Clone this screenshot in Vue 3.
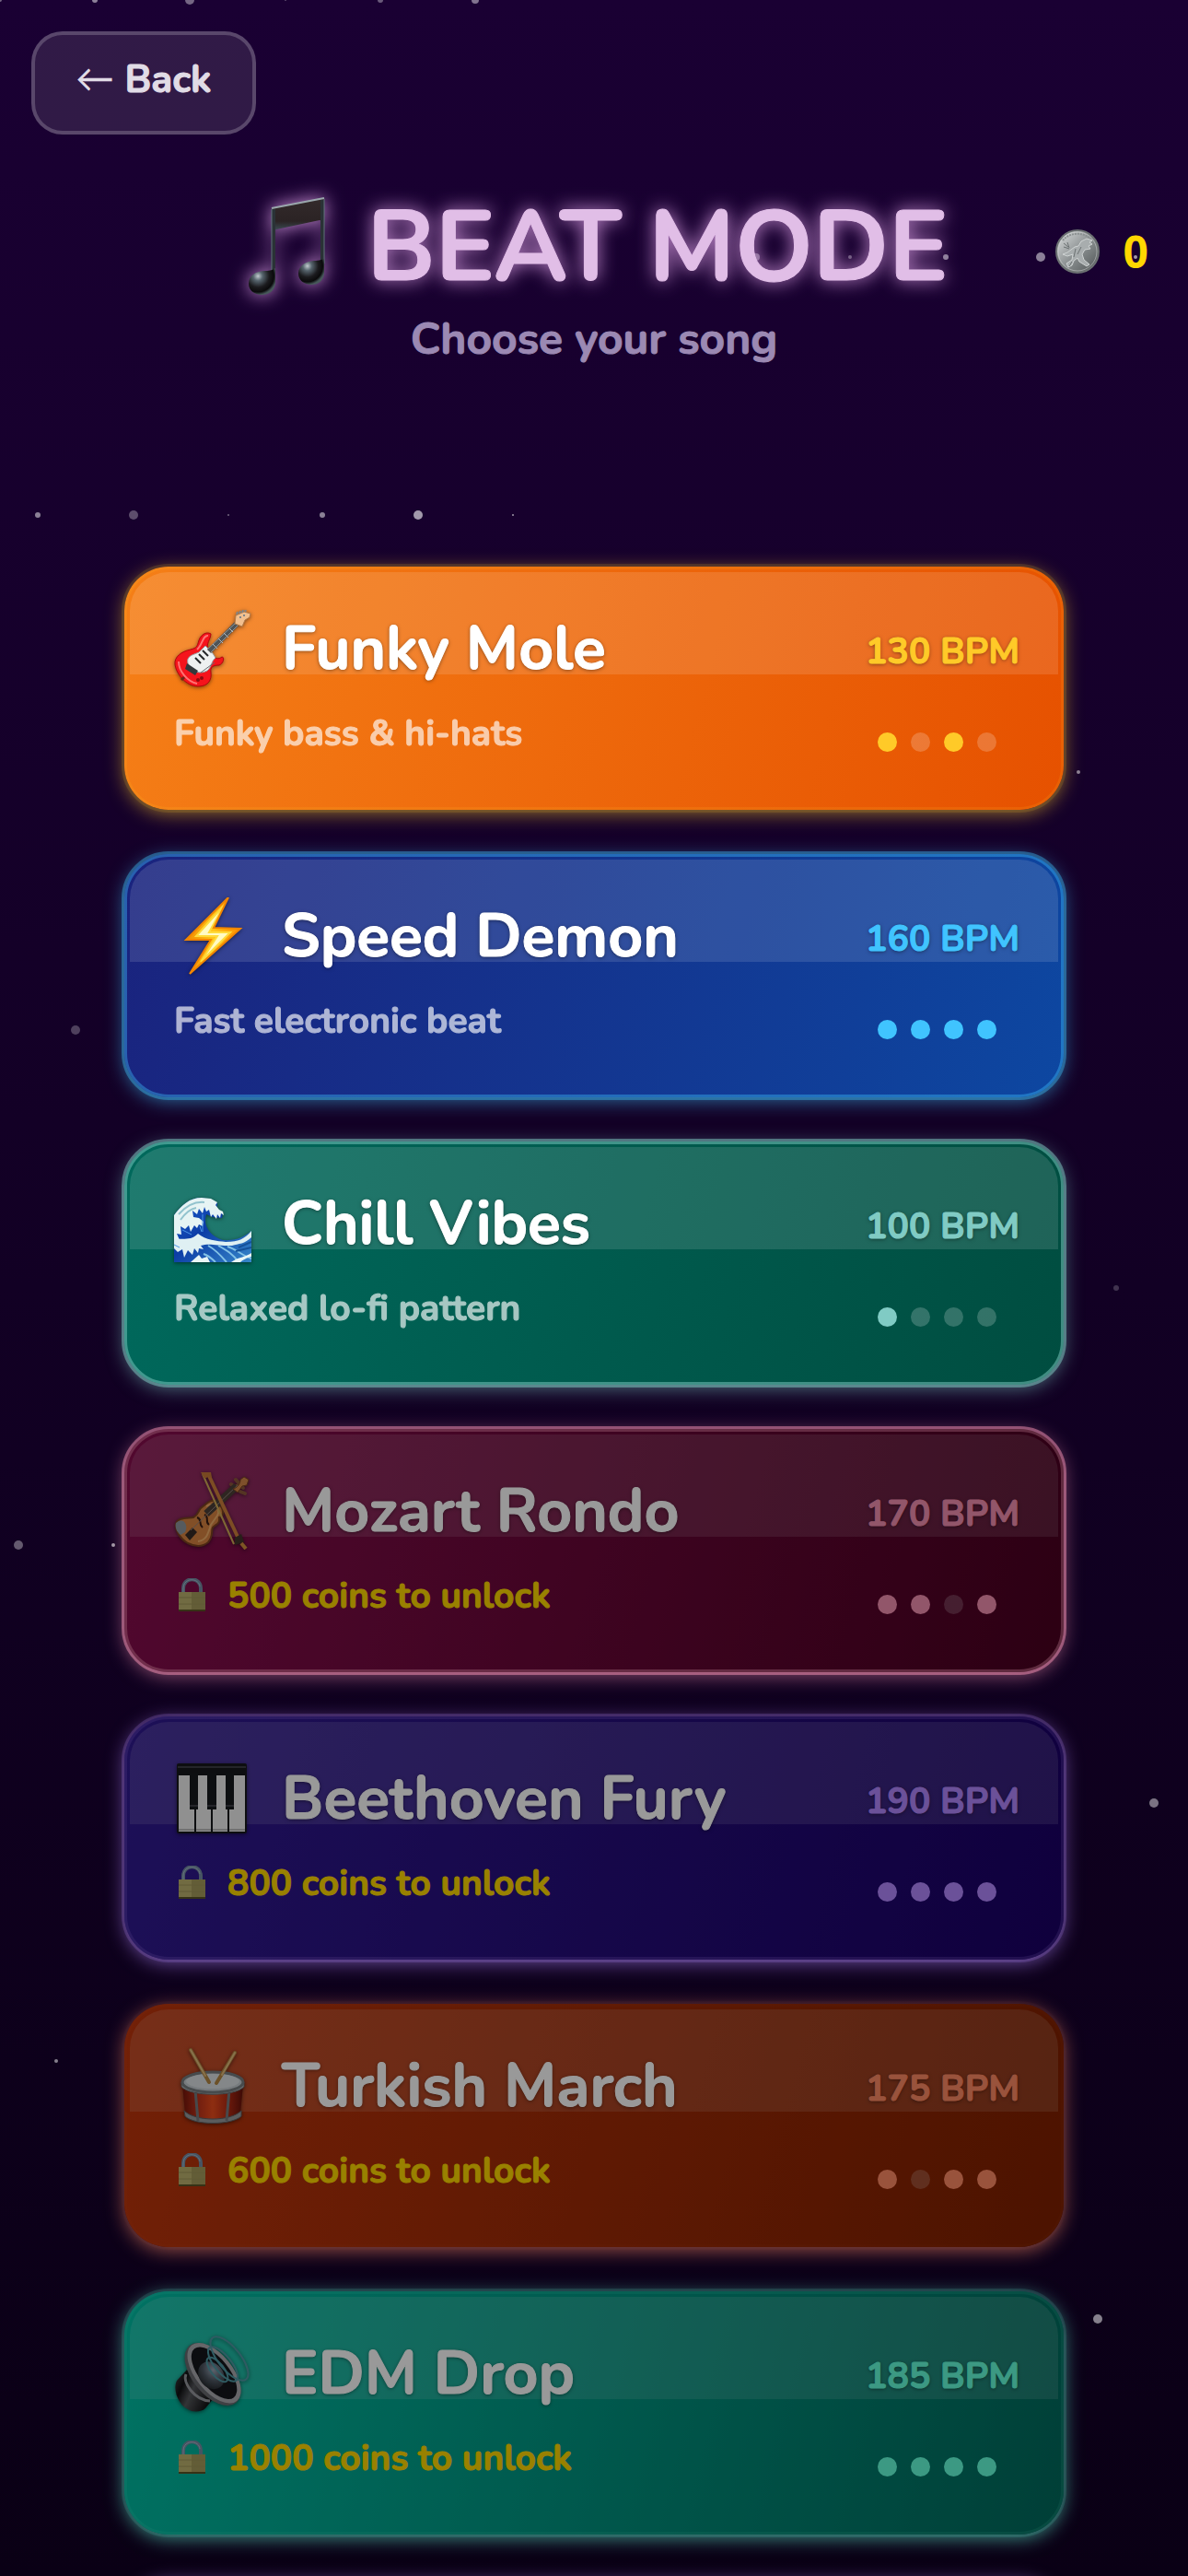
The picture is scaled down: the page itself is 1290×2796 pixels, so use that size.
<script setup>
import { ref } from 'vue'

const coins = ref(0)
const selected = ref(null)

const songs = [
  { id: 'funky', icon: 'guitar', name: 'Funky Mole', text: 'Funky bass & hi-hats', bpm: 130, beats: [1, 0, 1, 0], cost: 0 },
  { id: 'speed', icon: 'bolt', name: 'Speed Demon', text: 'Fast electronic beat', bpm: 160, beats: [1, 1, 1, 1], cost: 0 },
  { id: 'chill', icon: 'wave', name: 'Chill Vibes', text: 'Relaxed lo-fi pattern', bpm: 100, beats: [1, 0, 0, 0], cost: 0 },
  { id: 'mozart', icon: 'violin', name: 'Mozart Rondo', bpm: 170, beats: [1, 1, 0, 1], cost: 500 },
  { id: 'beethoven', icon: 'piano', name: 'Beethoven Fury', bpm: 190, beats: [1, 1, 1, 1], cost: 800 },
  { id: 'turkish', icon: 'drum', name: 'Turkish March', bpm: 175, beats: [1, 0, 1, 1], cost: 600 },
  { id: 'edm', icon: 'speaker', name: 'EDM Drop', bpm: 185, beats: [1, 1, 1, 1], cost: 1000 },
]

// x, y, radius, opacity
const stars = [
  [0, 0, 2, 0.4], [103, 0, 3, 0.5], [206, 0, 5, 0.4], [310, 0, 1, 0.3], [413, 0, 3, 0.35], [516, 0, 4, 0.45],
  [821, 279, 4, 0.4], [923, 279, 2, 0.35], [1027, 279, 3, 0.5], [1130, 279, 5, 0.5], [1233, 279, 2, 0.6],
  [41, 559, 3, 0.5], [145, 559, 5, 0.3], [248, 559, 1, 0.4], [350, 559, 3, 0.5], [454, 559, 5, 0.6], [557, 559, 1, 0.6],
  [1171, 838, 2, 0.5], [82, 1118, 5, 0.25], [1212, 1398, 3, 0.2], [20, 1677, 5, 0.35], [123, 1677, 2, 0.6],
  [1253, 1957, 5, 0.45], [61, 2237, 2, 0.5], [1192, 2517, 5, 0.5],
]

const choose = (song) => {
  if (song.cost > coins.value) return
  selected.value = song.id
}
</script>

<template>
  <main class="page">
    <svg class="stars" aria-hidden="true">
      <circle v-for="([x, y, r, o], i) in stars" :key="i" :cx="x" :cy="y" :r="r" :opacity="o" />
    </svg>

    <nav class="topbar">
      <button class="back" type="button"><span class="arrow">←</span> Back</button>
    </nav>

    <header class="head">
      <h1 class="title">
        <svg class="note" viewBox="0 0 84 106" aria-hidden="true">
          <defs>
            <linearGradient id="beam" x1="0" y1="0" x2="0" y2="1">
              <stop offset="0" stop-color="#332a2b" />
              <stop offset="0.7" stop-color="#2b2324" />
              <stop offset="1" stop-color="#3c5058" />
            </linearGradient>
            <radialGradient id="head" cx="0.35" cy="0.3" r="0.7">
              <stop offset="0" stop-color="#c3cbd0" />
              <stop offset="0.25" stop-color="#56646d" />
              <stop offset="0.6" stop-color="#1b1b1e" />
              <stop offset="0.85" stop-color="#0a0a0b" />
              <stop offset="1" stop-color="#47585a" />
            </radialGradient>
          </defs>
          <path d="M25 12 82 1V26L77 25 30 35 25 37Z" fill="url(#beam)" />
          <path d="M27 13V92M80 3V80" stroke="#2a3236" stroke-width="4" />
          <path d="M25 12 82 1" stroke="#9aa7ac" stroke-width="2" />
          <path d="M25 13V80M82 2V72" stroke="#5f7278" stroke-width="1" />
          <path d="M29 77V94C28 102 22 106 14 106 6 106 0 101 0 94 0 85 8 80 18 80 24 80 26 79 29 77Z" fill="url(#head)" />
          <path d="M82 66V83C81 91 76 95 68 95 60 95 54 90 54 83 54 74 62 70 71 69 77 69 80 68 82 66Z" fill="url(#head)" />
        </svg>
        <span class="title-text">BEAT MODE</span>
      </h1>
      <div class="coins">
        <svg class="coin" viewBox="0 0 48 48" aria-hidden="true">
          <defs>
            <linearGradient id="silver" x1="0" y1="0" x2="1" y2="1">
              <stop offset="0" stop-color="#dfe2e2" />
              <stop offset="0.5" stop-color="#8d9293" />
              <stop offset="1" stop-color="#4a4f50" />
            </linearGradient>
          </defs>
          <circle cx="24" cy="24" r="23" fill="url(#silver)" stroke="#6b7071" stroke-width="2" />
          <circle cx="24" cy="24" r="21" fill="none" stroke="#d3d6d6" stroke-width="1" opacity="0.5" />
          <path d="M8 12C15 3 31 2 39 11" fill="none" stroke="#8b9091" stroke-width="2" stroke-dasharray="2 1" />
          <path d="M34 10 40 12 37 14 40 16 36 18 38 21 32 22 29 27 31 33 37 38 34 40 26 35 24 31 20 34 18 39 14 41 12 37 18 33 19 27 13 29 8 27 13 25 17 22 21 19 25 18 28 13Z" fill="#a8adae" stroke="#cfd3d3" stroke-width="1" />
          <path d="M9 15 14 19M13 14 15 20M9 19 15 21M22 21 20 30M28 19 24 27M18 35 15 40" stroke="#6c7273" stroke-width="1" />
        </svg>
        <span>{{ coins }}</span>
      </div>
    </header>
    <p class="subtitle">Choose your song</p>

    <ul class="songs">
      <li v-for="song in songs" :key="song.id">
        <button class="card" :class="[song.id, { locked: song.cost }]" type="button" @click="choose(song)">
          <span class="shine" />
          <span class="info">
            <span class="heading">
              <svg v-if="song.icon === 'guitar'" class="icon" viewBox="0 0 84 84" aria-hidden="true">
                <path d="M40 26C35 23 29 27 27 33 25 40 25 41 18 43 8 45 0 51 1 59 2 69 13 83 26 83 38 83 41 75 40 68 39 62 42 60 49 60 54 58 55 51 52 51 48 54 45 53 43 50L37 43C34 38 40 31 40 26Z" fill="#f5141c" stroke="#b0060d" stroke-width="1" />
                <path d="M37 28C31 27 31 38 25 43M5 56C5 67 15 78 25 80" fill="none" stroke="#ff7474" stroke-width="2" />
                <path d="M34 39C38 43 42 46 45 52 40 56 41 62 36 66 28 70 20 68 15 58 13 50 20 49 27 46Z" fill="#eef1f1" stroke="#9ba0a2" stroke-width="1" />
                <path d="m23 52 6 6M27 48l6 6M31 44l6 6" stroke="#25282a" stroke-width="2" />
                <path d="m14 58 12 8-3 5-11-7Z" fill="#34383b" />
                <path d="M29 68 44 57" stroke="#666d70" stroke-width="1" />
                <circle cx="30" cy="74" r="2" fill="#8e0b10" />
                <circle cx="26" cy="76" r="2" fill="#8e0b10" />
                <path d="M38 45 68 15" stroke="#4f5457" stroke-width="6" />
                <path d="M36 43 67 14M40 46 69 17" stroke="#8d9396" stroke-width="1" />
                <path d="m42 37 5 5M48 31l5 5M54 25l5 5M60 20l4 4" stroke="#b9bdbf" stroke-width="1" />
                <path d="M66 15 67 6 76 2 83 4 82 8 77 11 74 18Z" fill="#f2bf8e" stroke="#b27a49" stroke-width="1" />
                <path d="m68 5 1-3M71 4l1-3M74 3l1-3M77 2l1-2M71 8h2M75 6h2" stroke="#80868a" stroke-width="2" />
                <path d="m8 76 3-3" stroke="#6d2718" stroke-width="3" />
              </svg>
              <svg v-else-if="song.icon === 'bolt'" class="icon" viewBox="0 0 84 84" aria-hidden="true">
                <defs>
                  <linearGradient id="bolt" x1="0" y1="0" x2="1" y2="0">
                    <stop offset="0" stop-color="#f28c00" />
                    <stop offset="0.5" stop-color="#ffc61a" />
                    <stop offset="1" stop-color="#ff8f00" />
                  </linearGradient>
                </defs>
                <path d="M59 0 43 33 72 34 17 83 40 46 13 46Z" fill="url(#bolt)" />
                <path d="M54 9 24 42H47L29 70 61 38H38Z" fill="#fffbc4" stroke="#ffdb3b" stroke-width="2" />
                <path d="M59 0 43 33 72 34 17 83 40 46 13 46Z" fill="none" stroke="#f28500" stroke-width="2" />
              </svg>
              <svg v-else-if="song.icon === 'wave'" class="icon" viewBox="0 0 84 84" aria-hidden="true">
                <defs>
                  <linearGradient id="sea" x1="0" y1="0" x2="1" y2="1">
                    <stop offset="0" stop-color="#1d5fd0" />
                    <stop offset="0.45" stop-color="#0c3da6" />
                    <stop offset="1" stop-color="#3787c9" />
                  </linearGradient>
                </defs>
                <path d="M0 33C8 22 17 14 30 14L40 16 47 20 46 27 53 30 52 36 42 35 35 32C31 44 39 56 53 60 66 61 76 57 84 50V84H0Z" fill="url(#sea)" />
                <path d="M0 33C8 22 17 14 30 14L40 15 47 19 45 22 49 27 53 29 54 33 51 31 50 36 47 32 46 37 42 32 40 35 38 27 35 29 33 24 31 31 27 26 25 32 20 28 21 35 27 36 32 40 31 45 27 43 25 47 22 44 18 51 16 44 12 48 7 45 8 54 3 53 6 60 0 59Z" fill="#e6f4f4" />
                <path d="M0 59C10 58 18 61 26 53 34 60 47 61 56 62 68 62 76 60 84 50V57C77 64 70 64 63 66 45 66 38 63 29 66L32 70 27 69 26 74 22 69 20 76 15 71 11 79 9 70 4 73 0 69Z" fill="#dff0f3" />
                <path d="M5 32C14 22 23 18 33 19M7 38C12 31 18 26 24 25" fill="none" stroke="#92c3ce" stroke-width="2" />
                <path d="M31 32 31 51M28 45 30 51M9 49 19 54M0 65 6 68" fill="none" stroke="#4b96e6" stroke-width="1" />
                <path d="M37 66C46 71 52 78 57 84M48 66C57 71 64 75 70 84M58 67C68 70 74 77 84 80M32 75C38 77 42 81 45 84" fill="none" stroke="#83c2e6" stroke-width="2" />
                <path d="M18 84 27 76 30 80 36 78 39 84ZM62 84C70 78 77 79 84 74V78C79 79 74 82 72 84Z" fill="#e9f6f6" />
                <path d="M70 68 84 62M67 72 84 68" stroke="#155199" stroke-width="2" />
              </svg>
              <svg v-else-if="song.icon === 'violin'" class="icon" viewBox="0 0 84 84" aria-hidden="true">
                <path d="M62 13 68 18M67 8 75 17M64 19 70 13M72 21 77 23" stroke="#8c583b" stroke-width="4" stroke-linecap="round" />
                <path d="M34 35C40 29 46 30 48 34 55 40 54 48 49 49 50 56 46 56 42 60 40 64 43 69 37 76 31 81 23 81 15 77 6 72 1 62 2 56 4 49 13 50 21 49 27 46 26 42 29 39Z" fill="#d98442" stroke="#7d4420" stroke-width="2" />
                <path d="M35 37C43 31 51 41 47 47L40 57C37 67 35 74 26 75" fill="none" stroke="#f2b06a" stroke-width="2" />
                <path d="M2 55C10 48 16 57 12 65L7 68C2 64 1 59 2 55Z" fill="#8f989e" />
                <path d="m12 68 8-8 5 5-8 9Z" fill="#382b26" />
                <path d="M25 49C31 51 26 56 31 60M38 57C33 54 39 49 33 46" fill="none" stroke="#3b1d13" stroke-width="2" />
                <path d="M35 45 68 15" stroke="#4e4038" stroke-width="8" />
                <path d="M18 63 69 14" stroke="#93827a" stroke-width="1" />
                <path d="M64 18C69 17 72 12 72 8L76 5 81 8 79 14 74 15 69 22Z" fill="#d28648" stroke="#7d4420" stroke-width="1" />
                <path d="M38 4 70 72" stroke="#d0803c" stroke-width="4" />
                <path d="M31 2 65 78" stroke="#d3ad58" stroke-width="2" />
                <path d="M29 0H40L41 6 37 5 33 7Z" fill="#c67838" />
                <path d="M66 71 73 67 76 76 66 79Z" fill="#41352a" />
                <path d="m73 77 5 6" stroke="#d0903c" stroke-width="4" />
              </svg>
              <svg v-else-if="song.icon === 'piano'" class="icon" viewBox="0 0 84 84" aria-hidden="true">
                <rect x="3" y="4" width="76" height="76" rx="2" fill="#17181b" />
                <path d="M5 17H22V78H5ZM24 17H40V78H24ZM42 17H58V78H42ZM60 17H77V78H60Z" fill="#f1f1f1" />
                <path d="M5 76H22M24 76H40M42 76H58M60 76H77" stroke="#bdbdbd" stroke-width="2" />
                <path d="M17 14H26V54H17ZM36 14H46V54H36ZM56 14H65V54H56Z" fill="#17191d" />
                <path d="M17 50H26M36 50H46M56 50H65M4 8H78" stroke="#3c3f45" stroke-width="2" />
              </svg>
              <svg v-else-if="song.icon === 'drum'" class="icon" viewBox="0 0 84 84" aria-hidden="true">
                <defs>
                  <linearGradient id="shell" x1="0" y1="0" x2="1" y2="0">
                    <stop offset="0" stop-color="#75150a" />
                    <stop offset="0.25" stop-color="#bc321a" />
                    <stop offset="0.5" stop-color="#ed4d1d" />
                    <stop offset="0.75" stop-color="#b52b14" />
                    <stop offset="1" stop-color="#65110a" />
                  </linearGradient>
                </defs>
                <path d="M9 40 12 72C22 85 62 85 72 72L75 40Z" fill="url(#shell)" />
                <path d="M11 69C23 81 61 81 73 69V75C62 85 22 85 12 75Z" fill="#989b9d" stroke="#5e6265" stroke-width="1" />
                <path d="M23 46 26 80M60 46 57 80" stroke="#777b7e" stroke-width="3" />
                <path d="M8 38V43C18 54 66 54 76 43V38Z" fill="#b5bbbd" stroke="#64696c" stroke-width="1" />
                <ellipse cx="42" cy="38" rx="33" ry="11" fill="#c7ced2" stroke="#777d80" stroke-width="3" />
                <ellipse cx="42" cy="37" rx="29" ry="8" fill="#dce2e5" />
                <path d="M18 3 38 38M66 6 46 39" stroke="#b48743" stroke-width="4" stroke-linecap="round" />
                <path d="M18 3 34 31M66 6 52 30" stroke="#e2bd7e" stroke-width="2" stroke-linecap="round" />
              </svg>
              <svg v-else class="icon" viewBox="0 0 84 84" aria-hidden="true">
                <defs>
                  <linearGradient id="magnet" x1="0" y1="0" x2="1" y2="0.5">
                    <stop offset="0" stop-color="#46484b" />
                    <stop offset="0.3" stop-color="#101113" />
                    <stop offset="0.55" stop-color="#55575b" />
                    <stop offset="1" stop-color="#141416" />
                  </linearGradient>
                  <radialGradient id="dome" cx="0.4" cy="0.3" r="0.8">
                    <stop offset="0" stop-color="#98a4b5" />
                    <stop offset="0.5" stop-color="#4d5661" />
                    <stop offset="1" stop-color="#1f2225" />
                  </radialGradient>
                </defs>
                <path d="M14 38 3 50C-2 60 5 79 19 83 25 84 31 83 34 80L43 69Z" fill="url(#magnet)" />
                <path d="M13 43C9 52 22 71 39 72" fill="none" stroke="#96989e" stroke-width="3" />
                <g transform="translate(42 43) rotate(51)">
                  <ellipse rx="40" ry="22" fill="#696b71" />
                  <ellipse cy="-2" rx="39" ry="20" fill="#aaaab0" />
                  <ellipse cy="-2" rx="34" ry="16" fill="#15171b" />
                  <ellipse cy="2" rx="16" ry="13" fill="url(#dome)" />
                </g>
                <g fill="none" stroke="#4f98a4" stroke-width="2">
                  <ellipse cx="60" cy="26" rx="29" ry="12" transform="rotate(51 60 26)" />
                  <ellipse cx="53" cy="32" rx="23" ry="9" transform="rotate(51 53 32)" />
                  <ellipse cx="47" cy="38" rx="16" ry="7" transform="rotate(51 47 38)" />
                </g>
              </svg>
              <span class="name">{{ song.name }}</span>
            </span>
            <span v-if="song.cost" class="text price">
              <svg class="lock" viewBox="0 0 29 36" aria-hidden="true">
                <path d="M5 17V11C5-2 24-2 24 11V17" fill="none" stroke="#768ca4" stroke-width="4" />
                <path d="M5 15V11C5-1 22-1 23 9" fill="none" stroke="#a6bdd0" stroke-width="1" />
                <path d="M0 15H29V35H0Z" fill="#a59b5d" />
                <path d="M0 15H14V35H0Z" fill="#bdb36f" />
                <path d="M0 21H29M0 28H29" stroke="#a0965b" stroke-width="1" />
                <path d="M0 35H29" stroke="#5b5425" stroke-width="2" />
              </svg>
              {{ song.cost }} coins to unlock
            </span>
            <span v-else class="text note-text">{{ song.text }}</span>
          </span>
          <span class="tempo">
            <span class="bpm">{{ song.bpm }} BPM</span>
            <span class="beats">
              <span v-for="(on, i) in song.beats" :key="i" class="beat" :class="{ on }" />
            </span>
          </span>
        </button>
      </li>
      <li class="card next" aria-hidden="true" />
    </ul>
  </main>
</template>

<style>
body {
  margin: 0;
  background: #0a0015;
}
</style>

<style scoped>
.page {
  position: relative;
  isolation: isolate;
  box-sizing: border-box;
  height: 100vh;
  overflow: hidden;
  background: linear-gradient(#1a0033, #0a0015);
  font-family: Nunito, Lato, sans-serif;
  font-weight: 700;
  -webkit-text-stroke: 1px currentColor;
}

.stars {
  position: absolute;
  inset: 0;
  z-index: -1;
  width: 100%;
  height: 100%;
  fill: #fff;
}

/* HEADER */
.topbar {
  padding: 34px 34px 0;
}

.back {
  height: 112px;
  padding: 0 44px 8px;
  border: 4px solid rgba(255, 255, 255, 0.2);
  border-radius: 34px;
  background: rgba(255, 255, 255, 0.1);
  color: #e1dce6;
  font: inherit;
  font-size: 42px;
  cursor: pointer;
}

.arrow {
  font-weight: 400;
  -webkit-text-stroke: 0;
}

.head {
  display: grid;
  grid-template-columns: 1fr auto 1fr;
  align-items: center;
  margin-top: 58px;
  padding: 0 43px;
}

.title {
  grid-column: 2;
  display: flex;
  align-items: center;
  gap: 45px;
  margin: 0;
  color: #e1bee7;
  font-size: 108px;
  line-height: 120px;
  text-shadow: 0 0 20px #ce93d8;
}

.title-text {
  padding-top: 5px;
}

.note {
  width: 84px;
  height: 106px;
  margin-left: 9px;
  filter: drop-shadow(0 0 10px #ce93d8);
}

.coins {
  justify-self: end;
  display: flex;
  align-items: center;
  gap: 26px;
  padding-top: 12px;
  color: #ffd700;
  font-family: "Noto Sans", sans-serif;
  font-size: 48px;
  line-height: 60px;
  -webkit-text-stroke: 0;
}

.coin {
  width: 48px;
  height: 48px;
}

.subtitle {
  margin: 9px 0 0;
  color: #9b89b3;
  font-size: 48px;
  line-height: 60px;
  text-align: center;
}

/* SONGS */
.songs {
  display: flex;
  flex-direction: column;
  gap: 48px;
  margin: 217px 135px 0;
  padding: 0;
  list-style: none;
}

.card {
  --from: #311b92;
  --to: #1a0066;
  --accent: 179, 136, 255;
  --ring: 0.3;
  position: relative;
  display: flex;
  justify-content: space-between;
  box-sizing: border-box;
  width: 100%;
  min-height: 264px;
  padding: 47px 48px 0 54px;
  border: none;
  border-radius: 48px;
  background: linear-gradient(105deg, var(--from), var(--to));
  box-shadow: 0 4px 20px rgba(var(--accent), 0.55);
  color: #fff;
  font: inherit;
  text-align: left;
  cursor: pointer;
}

.card::before {
  content: "";
  position: absolute;
  inset: -3px;
  border: 6px solid rgba(var(--accent), var(--ring));
  border-radius: 51px;
}

.locked::after {
  content: "";
  position: absolute;
  inset: 0;
  border-radius: 48px;
  background: rgba(0, 0, 0, 0.4);
}

.funky {
  --from: #f57f17;
  --to: #e65100;
  --accent: 255, 202, 40;
  --ring: 0.12;
}

.speed {
  --from: #1a237e;
  --to: #0d47a1;
  --accent: 64, 196, 255;
  --ring: 0.38;
}

.chill {
  --from: #00695c;
  --to: #004d40;
  --accent: 128, 203, 196;
  --ring: 0.5;
}

.mozart {
  --from: #880e4f;
  --to: #4a0020;
  --accent: 244, 143, 177;
  --ring: 0.5;
}

.beethoven {
  --ring: 0.2;
}

.turkish {
  --from: #bf360c;
  --to: #7f2000;
  --accent: 255, 138, 101;
  --ring: 0.03;
}

.edm {
  --from: #00bfa5;
  --to: #00695c;
  --accent: 100, 255, 218;
  --ring: 0.12;
}

.shine {
  position: absolute;
  inset: 6px 6px auto;
  height: 111px;
  border-radius: 42px 42px 0 0;
  background: rgba(255, 255, 255, 0.12);
}

.info,
.tempo {
  position: relative;
  display: flex;
  flex-direction: column;
}

.info {
  gap: 27px;
}

.heading {
  display: flex;
  align-items: center;
  gap: 33px;
}

.icon {
  width: 84px;
  height: 84px;
  filter: drop-shadow(0 1px 2px rgba(0, 0, 0, 0.5));
}

.name {
  font-size: 66px;
  line-height: 84px;
  text-shadow: 0 1px 4px rgba(0, 0, 0, 0.5);
}

.text {
  font-size: 39px;
  line-height: 48px;
}

.note-text {
  opacity: 0.65;
}

.price {
  display: flex;
  align-items: center;
  gap: 24px;
  padding-left: 5px;
  color: #ffd700;
}

.lock {
  width: 29px;
  height: 36px;
  margin-bottom: 4px;
}

.tempo {
  align-items: flex-end;
  gap: 63px;
  padding-top: 22px;
}

.bpm {
  color: rgb(var(--accent));
  font-size: 39px;
  line-height: 48px;
  text-shadow: 0 1px 4px rgba(0, 0, 0, 0.5);
}

.beats {
  display: flex;
  gap: 15px;
  padding-right: 25px;
}

.beat {
  width: 21px;
  height: 21px;
  border-radius: 50%;
  background: rgba(255, 255, 255, 0.2);
}

.beat.on {
  background: rgb(var(--accent));
}
</style>
